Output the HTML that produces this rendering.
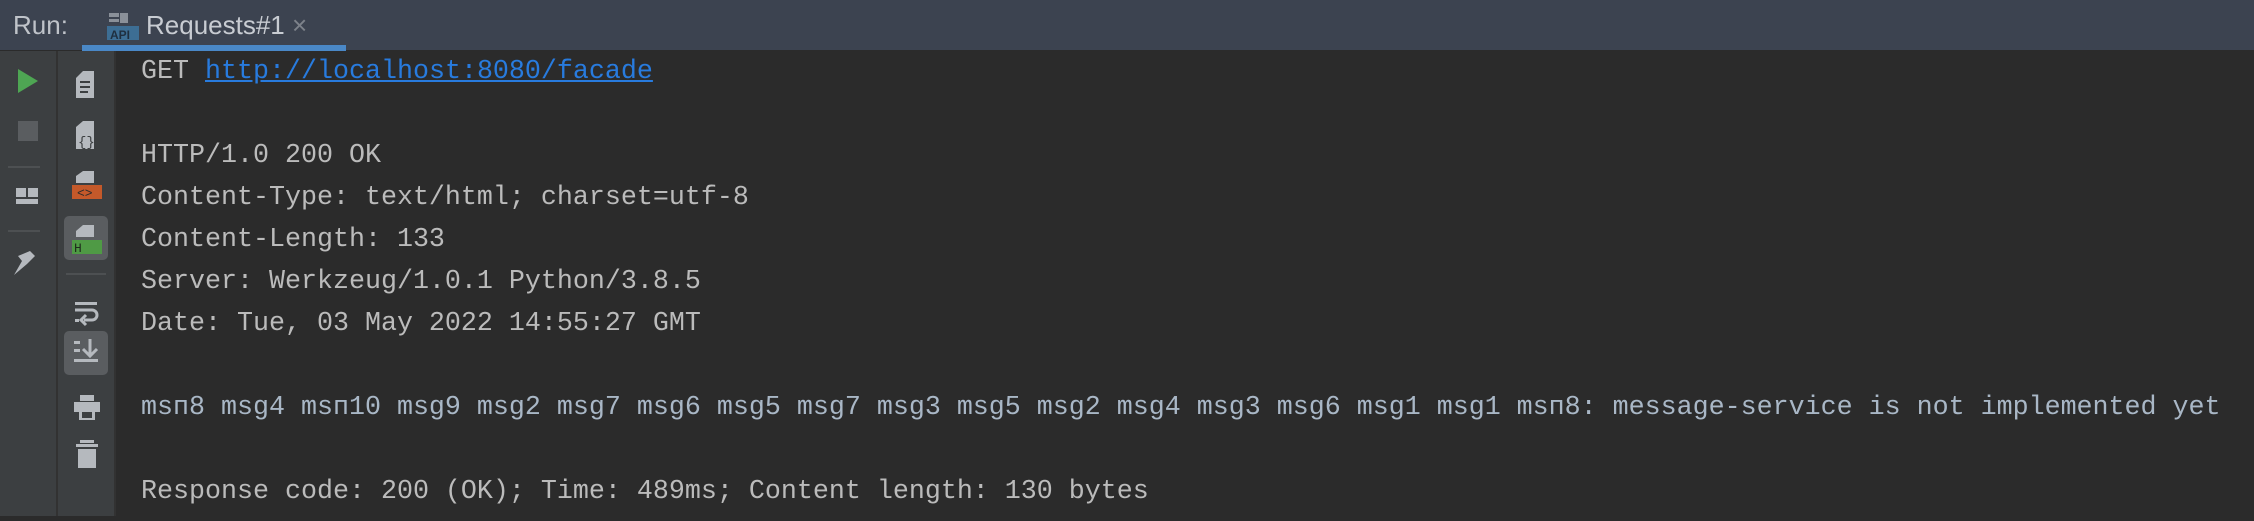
<!DOCTYPE html>
<html><head><meta charset="utf-8"><style>
html,body{margin:0;padding:0;width:2254px;height:516px;overflow:hidden;background:#2b2b2b}
.hdr{position:absolute;left:0;top:0;width:2254px;height:50px;background:#3c4350}
.hdr .run{position:absolute;left:13px;top:10px;font:26px "Liberation Sans",sans-serif;color:#bfc3c9}
.hdr .tab{position:absolute;left:108px;top:10px;font:26px "Liberation Sans",sans-serif;color:#c8ccd2}
.ul{position:absolute;left:82px;top:45px;width:264px;height:6px;background:#4a88c7}
.c1{position:absolute;left:0;top:51px;width:56px;height:465px;background:#3c3f41;border-right:2px solid #323232}
.c2{position:absolute;left:58px;top:51px;width:56px;height:465px;background:#3c3f41;border-right:2px solid #323232}
.txt{position:absolute;left:141px;top:51px;font:26.67px/42px "Liberation Mono",monospace;color:#bbbbbb;white-space:pre}
a{color:#287bde;text-decoration:underline}
.m{color:#a9b7c6}
</style></head><body>
<div class="hdr">
<div class="run">Run:</div>
<svg style="position:absolute;left:107px;top:12px" width="32" height="30"><rect x="2" y="1" width="10" height="4" fill="#8a9099"/><rect x="2" y="7" width="10" height="3" fill="#8a9099"/><rect x="13" y="1" width="8" height="10" fill="#8a9099"/><rect x="0" y="14" width="32" height="14" fill="#3d6e94"/><text x="3" y="27" font-family="Liberation Sans" font-size="12" font-weight="bold" fill="#1f2f40">API</text></svg>
<div class="tab" style="left:146px">Requests#1 <span style="color:#7d828a">×</span></div>
</div>
<div class="ul"></div>
<div class="c1">
<svg width="56" height="465">
<polygon points="18,18 38,30 18,42" fill="#4ea653"/>
<rect x="18" y="70" width="20" height="20" fill="#5a5d60"/>
<rect x="8" y="115" width="32" height="2" fill="#4d5052"/>
<rect x="16" y="137" width="10" height="9" fill="#b5b9be"/><rect x="28" y="137" width="10" height="9" fill="#b5b9be"/><rect x="16" y="148" width="22" height="5" fill="#b5b9be"/>
<rect x="8" y="179" width="32" height="2" fill="#4d5052"/>
<path d="M14 224 L22 210 L18 205 L30 200 L35 205 L27 213 Z" fill="#b5b9be"/>
</svg>
</div>
<div class="c2">
<svg width="56" height="465">
<path d="M18 27 L25 20 L36 20 L36 47 L18 47 Z" fill="#b5b9be"/><rect x="22" y="30" width="10" height="2" fill="#3c3f41"/><rect x="22" y="35" width="10" height="2" fill="#3c3f41"/><rect x="22" y="40" width="8" height="2" fill="#3c3f41"/>
<path d="M18 76 L25 70 L36 70 L36 98 L18 98 Z" fill="#b5b9be"/><text x="20" y="95" font-family="Liberation Mono" font-size="14" fill="#3c3f41">{}</text>
<path d="M18 125 L25 120 L36 120 L36 132 L18 132 Z" fill="#b5b9be"/><rect x="14" y="134" width="30" height="14" fill="#c4592a"/><text x="19" y="146" font-family="Liberation Mono" font-size="13" fill="#2b2b2b">&lt;&gt;</text>
<rect x="6" y="165" width="44" height="44" rx="5" fill="#5a5d60"/>
<path d="M18 180 L25 174 L36 174 L36 186 L18 186 Z" fill="#b5b9be"/><rect x="14" y="189" width="30" height="14" fill="#4f9a45"/><text x="16" y="201" font-family="Liberation Mono" font-size="13" fill="#1e2a1c">H</text>
<rect x="8" y="222" width="40" height="2" fill="#4d5052"/>
<rect x="17" y="251" width="22" height="3" fill="#b5b9be"/><path d="M17 259 H34 a5 5 0 0 1 0 10 H26" stroke="#b5b9be" stroke-width="3" fill="none"/><path d="M28 264 L23 269 L28 274" stroke="#b5b9be" stroke-width="3" fill="none"/><rect x="17" y="268" width="4" height="3" fill="#b5b9be"/>
<rect x="6" y="280" width="44" height="44" rx="5" fill="#5a5d60"/>
<rect x="16" y="290" width="6" height="3" fill="#b5b9be"/><rect x="16" y="298" width="6" height="3" fill="#b5b9be"/><path d="M32 288 V304 M25 298 L32 305 L39 298" stroke="#b5b9be" stroke-width="3" fill="none"/><rect x="16" y="308" width="24" height="3" fill="#b5b9be"/>
<rect x="22" y="344" width="14" height="6" fill="#b5b9be"/><rect x="16" y="351" width="26" height="10" fill="#b5b9be"/><rect x="21" y="358" width="16" height="11" fill="#b5b9be"/><rect x="24" y="361" width="10" height="6" fill="#3c3f41"/>
<rect x="22" y="389" width="14" height="3" fill="#b5b9be"/><rect x="18" y="393" width="22" height="3" fill="#b5b9be"/><rect x="20" y="398" width="18" height="19" fill="#b5b9be"/>
</svg>
</div>
<div class="txt">GET <a>http://localhost:8080/facade</a>

HTTP/1.0 200 OK
Content-Type: text/html; charset=utf-8
Content-Length: 133
Server: Werkzeug/1.0.1 Python/3.8.5
Date: Tue, 03 May 2022 14:55:27 GMT

<span class="m">msп8 msg4 msп10 msg9 msg2 msg7 msg6 msg5 msg7 msg3 msg5 msg2 msg4 msg3 msg6 msg1 msg1 msп8: message-service is not implemented yet</span>

Response code: 200 (OK); Time: 489ms; Content length: 130 bytes</div>
</body></html>
